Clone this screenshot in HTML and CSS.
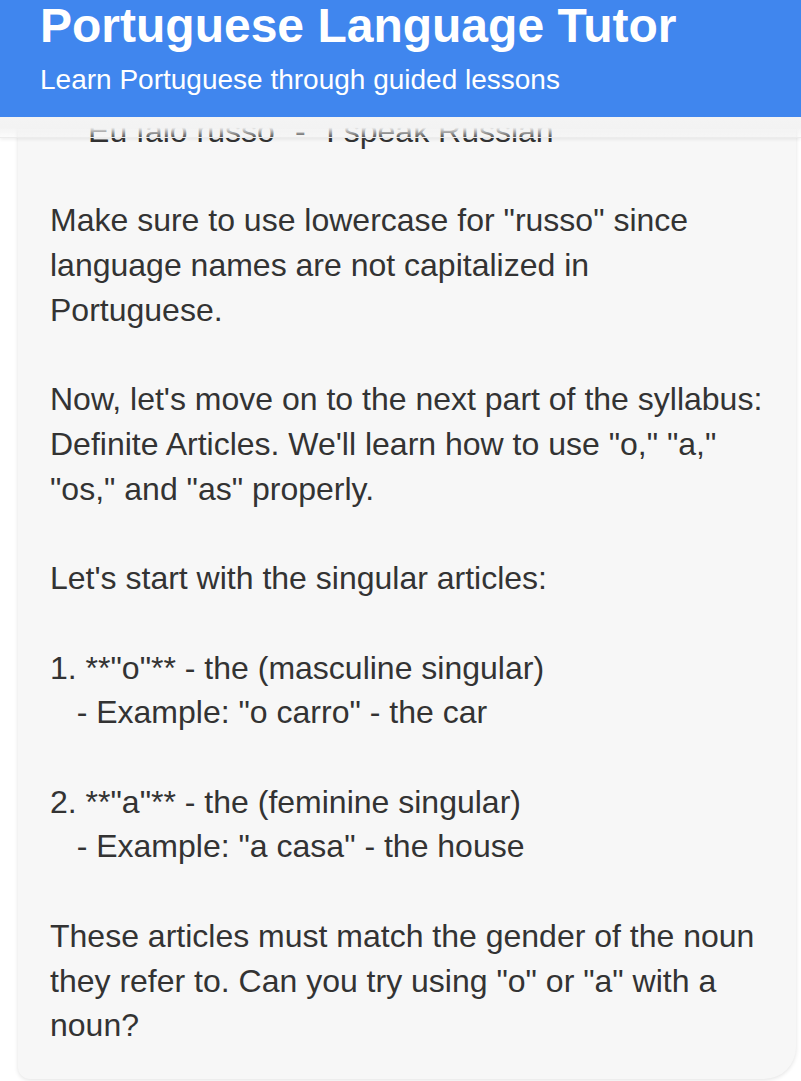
FILE: index.html
```html
<!DOCTYPE html>
<html lang="en">
<head>
<meta charset="utf-8">
<title>Portuguese Language Tutor</title>
<link rel="stylesheet" href="styles.css">
</head>
<body>
<div class="app">
  <header class="app-header">
    <h1 class="app-title">Portuguese Language Tutor</h1>
    <p class="app-subtitle">Learn Portuguese through guided lessons</p>
  </header>
  <main class="messages">
    <div class="bubble bubble-tutor">Perfect! Your sentence is correct:

   "Eu falo russo" - "I speak Russian"

Make sure to use lowercase for "russo" since language names are not capitalized in Portuguese.

Now, let's move on to the next part of the syllabus: Definite Articles. We'll learn how to use "o," "a," "os," and "as" properly.

Let's start with the singular articles:

1. **"o"** - the (masculine singular)
   - Example: "o carro" - the car

2. **"a"** - the (feminine singular)
   - Example: "a casa" - the house

These articles must match the gender of the noun they refer to. Can you try using "o" or "a" with a noun?</div>
  </main>
</div>
</body>
</html>
```

FILE: styles.css
```css
html, body {
  margin: 0;
  padding: 0;
  height: 100%;
  background: #ffffff;
  font-family: "Liberation Sans", Arial, sans-serif;
}

.app {
  height: 100vh;
  display: flex;
  flex-direction: column;
}

.app-header {
  position: relative;
  z-index: 2;
  flex: none;
  background: #4086ee;
  color: #ffffff;
  padding: 0 40px 21px;
}

.app-header::after {
  content: "";
  position: absolute;
  left: 0;
  right: 0;
  top: 100%;
  height: 20px;
  background: linear-gradient(to bottom,
    rgba(244, 244, 244, 1) 0%,
    rgba(243, 243, 243, 1) 52%,
    rgba(238, 238, 238, 0.2) 100%);
  border-bottom: 1px solid rgba(0, 0, 0, 0.03);
  box-shadow: 0 2px 3px rgba(0, 0, 0, 0.06);
}

.app-title {
  margin: 0;
  font-size: 48px;
  line-height: 1.1;
  font-weight: 700;
}

.app-subtitle {
  margin: 10px 0 0;
  font-size: 28px;
  line-height: 1.2;
  font-weight: 400;
}

.messages {
  flex: 1;
  min-height: 0;
  overflow: hidden;
  display: flex;
  flex-direction: column;
  justify-content: flex-end;
  padding: 0 5px 2px 18px;
}

.bubble {
  flex: none;
  white-space: pre-wrap;
  font-size: 32px;
  line-height: 44.72px;
  color: #333333;
}

.bubble-tutor {
  background: #f7f7f7;
  padding: 0 30px 31px 32px;
  border-radius: 12px 12px 32px 12px;
  box-shadow: 0 1px 4px rgba(0, 0, 0, 0.12);
}
```
